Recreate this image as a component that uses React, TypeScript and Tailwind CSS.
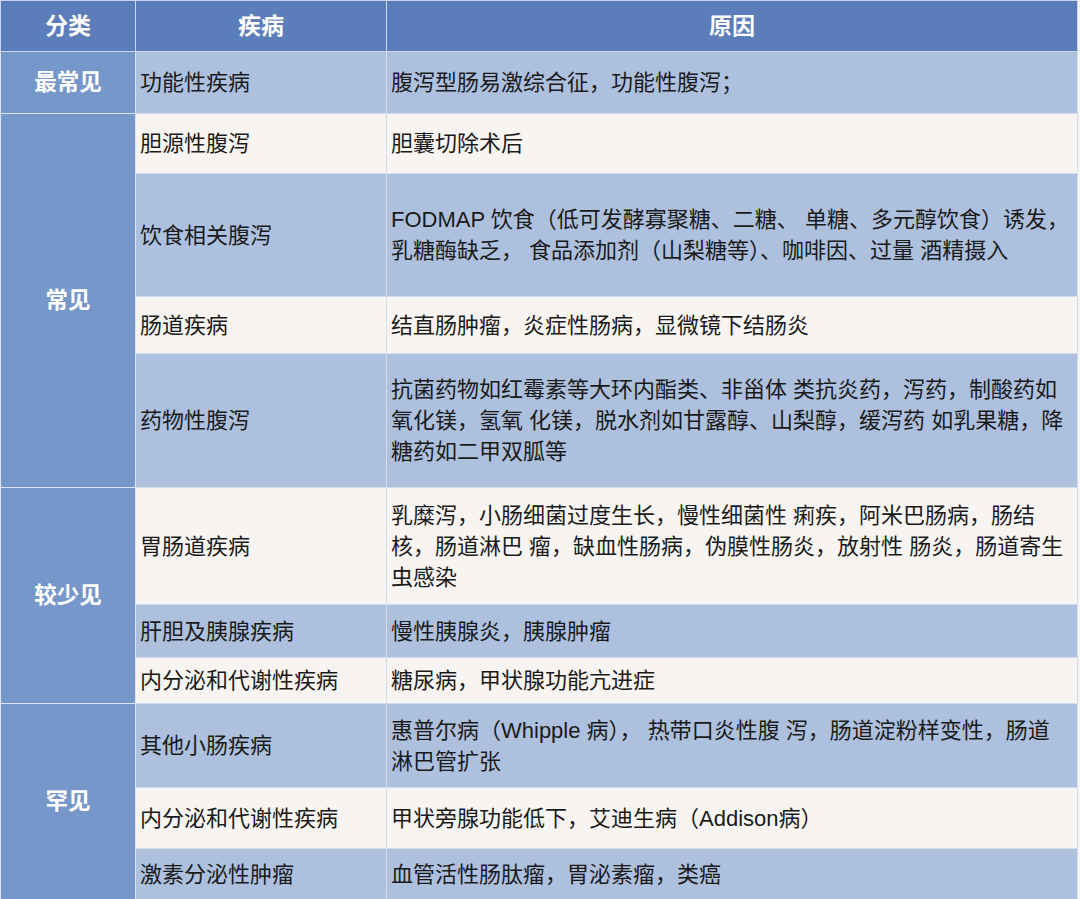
type Row = {
  disease: string;
  cause: string[];
  h: number;
};

type Group = {
  label: string;
  rows: Row[];
};

const groups: Group[] = [
  {
    label: "最常见",
    rows: [{ disease: "功能性疾病", cause: ["腹泻型肠易激综合征，功能性腹泻；"], h: 62 }],
  },
  {
    label: "常见",
    rows: [
      { disease: "胆源性腹泻", cause: ["胆囊切除术后"], h: 60 },
      {
        disease: "饮食相关腹泻",
        cause: [
          "FODMAP 饮食（低可发酵寡聚糖、二糖、 单糖、多元醇饮食）诱发，",
          "乳糖酶缺乏， 食品添加剂（山梨糖等）、咖啡因、过量 酒精摄入",
        ],
        h: 123,
      },
      { disease: "肠道疾病", cause: ["结直肠肿瘤，炎症性肠病，显微镜下结肠炎"], h: 57 },
      {
        disease: "药物性腹泻",
        cause: [
          "抗菌药物如红霉素等大环内酯类、非甾体 类抗炎药，泻药，制酸药如",
          "氧化镁，氢氧 化镁，脱水剂如甘露醇、山梨醇，缓泻药 如乳果糖，降",
          "糖药如二甲双胍等",
        ],
        h: 134,
      },
    ],
  },
  {
    label: "较少见",
    rows: [
      {
        disease: "胃肠道疾病",
        cause: [
          "乳糜泻，小肠细菌过度生长，慢性细菌性 痢疾，阿米巴肠病，肠结",
          "核，肠道淋巴 瘤，缺血性肠病，伪膜性肠炎，放射性 肠炎，肠道寄生",
          "虫感染",
        ],
        h: 117,
      },
      { disease: "肝胆及胰腺疾病", cause: ["慢性胰腺炎，胰腺肿瘤"], h: 53 },
      { disease: "内分泌和代谢性疾病", cause: ["糖尿病，甲状腺功能亢进症"], h: 46 },
    ],
  },
  {
    label: "罕见",
    rows: [
      {
        disease: "其他小肠疾病",
        cause: ["惠普尔病（Whipple 病）， 热带口炎性腹 泻，肠道淀粉样变性，肠道", "淋巴管扩张"],
        h: 84,
      },
      { disease: "内分泌和代谢性疾病", cause: ["甲状旁腺功能低下，艾迪生病（Addison病）"], h: 61 },
      { disease: "激素分泌性肿瘤", cause: ["血管活性肠肽瘤，胃泌素瘤，类癌"], h: 52 },
    ],
  },
];

export default function App() {
  let idx = 0;
  return (
    <div
      className="w-[1080px] h-[899px] overflow-hidden bg-[#f7f4f1]"
      style={{ fontFamily: '"Liberation Sans", "Noto Sans CJK SC", sans-serif' }}
    >
      <table className="w-[1078px] border-collapse table-fixed text-[22px] text-[#1a1a1a]">
        <colgroup>
          <col className="w-[135px]" />
          <col className="w-[251px]" />
          <col />
        </colgroup>
        <thead>
          <tr className="h-[51px] bg-[#5b7dba] text-white text-[23px]">
            <th className="border border-[#c9d6ec] font-bold">分类</th>
            <th className="border border-[#c9d6ec] font-bold">疾病</th>
            <th className="border border-[#c9d6ec] font-bold">原因</th>
          </tr>
        </thead>
        <tbody>
          {groups.map((g) =>
            g.rows.map((r, i) => {
              const blue = idx % 2 === 0;
              idx++;
              const bg = blue ? "bg-[#adc0de]" : "bg-[#f7f4f1]";
              return (
                <tr key={g.label + i} className={bg} style={{ height: r.h }}>
                  {i === 0 && (
                    <td
                      rowSpan={g.rows.length}
                      className="border border-[#dde5f2] bg-[#7697c9] text-center text-[22.5px] font-bold text-white"
                    >
                      {g.label}
                    </td>
                  )}
                  <td className="border border-[#d3ddee] pl-[4px] whitespace-nowrap">{r.disease}</td>
                  <td className="border border-[#d3ddee] pl-[4px] leading-[31px] whitespace-nowrap">
                    {r.cause.map((c, j) => (
                      <div key={j}>{c}</div>
                    ))}
                  </td>
                </tr>
              );
            })
          )}
        </tbody>
      </table>
    </div>
  );
}
